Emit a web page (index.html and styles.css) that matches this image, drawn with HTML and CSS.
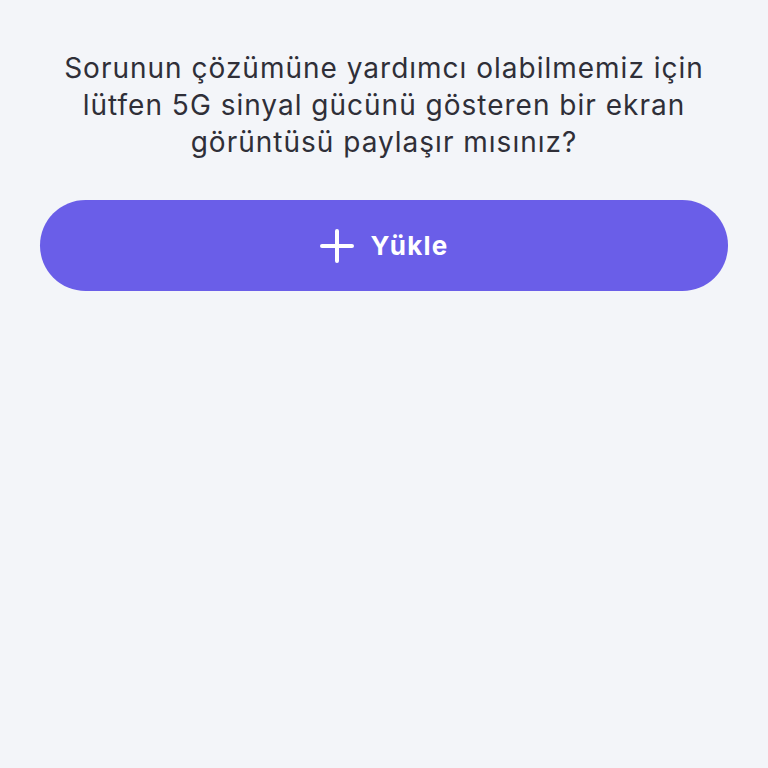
FILE: index.html
```
<!DOCTYPE html>
<html lang="tr">
<head>
<meta charset="utf-8">
<link rel="stylesheet" href="styles.css">
</head>
<body>
<main class="page">
  <p class="question">Sorunun çözümüne yardımcı olabilmemiz için<br>lütfen 5G sinyal gücünü gösteren bir ekran<br>görüntüsü paylaşır mısınız?</p>
  <button class="upload" type="button">
    <svg class="plus" width="34" height="34" viewBox="0 0 34 34" aria-hidden="true">
      <path d="M17 2V32M2 17H32" stroke="#fff" stroke-width="4" stroke-linecap="round" fill="none"/>
    </svg>
    <span class="label">Yükle</span>
  </button>
</main>
</body>
</html>
```
FILE: styles.css
```
html, body {
  margin: 0;
  padding: 0;
  background: #f3f5f9;
  width: 768px;
  height: 768px;
  overflow: hidden;
}
.page {
  display: flex;
  flex-direction: column;
  align-items: center;
  padding: 50px 40px 0;
}
.question {
  margin: 0;
  font-family: Inter, "Noto Sans", sans-serif;
  font-size: 28px;
  font-weight: 400;
  letter-spacing: 1px;
  line-height: 37px;
  color: #2f2f38;
  text-align: center;
  white-space: nowrap;
}
.upload {
  margin-top: 39px;
  width: 688px;
  height: 91px;
  border: none;
  border-radius: 46px;
  background: #6a5ee8;
  display: flex;
  align-items: center;
  justify-content: center;
  gap: 17px;
  padding: 0;
}
.plus { display: block; }
.label {
  font-family: Inter, "Noto Sans", sans-serif;
  font-weight: 700;
  font-size: 26px;
  letter-spacing: 1.2px;
  color: #fff;
}
```
